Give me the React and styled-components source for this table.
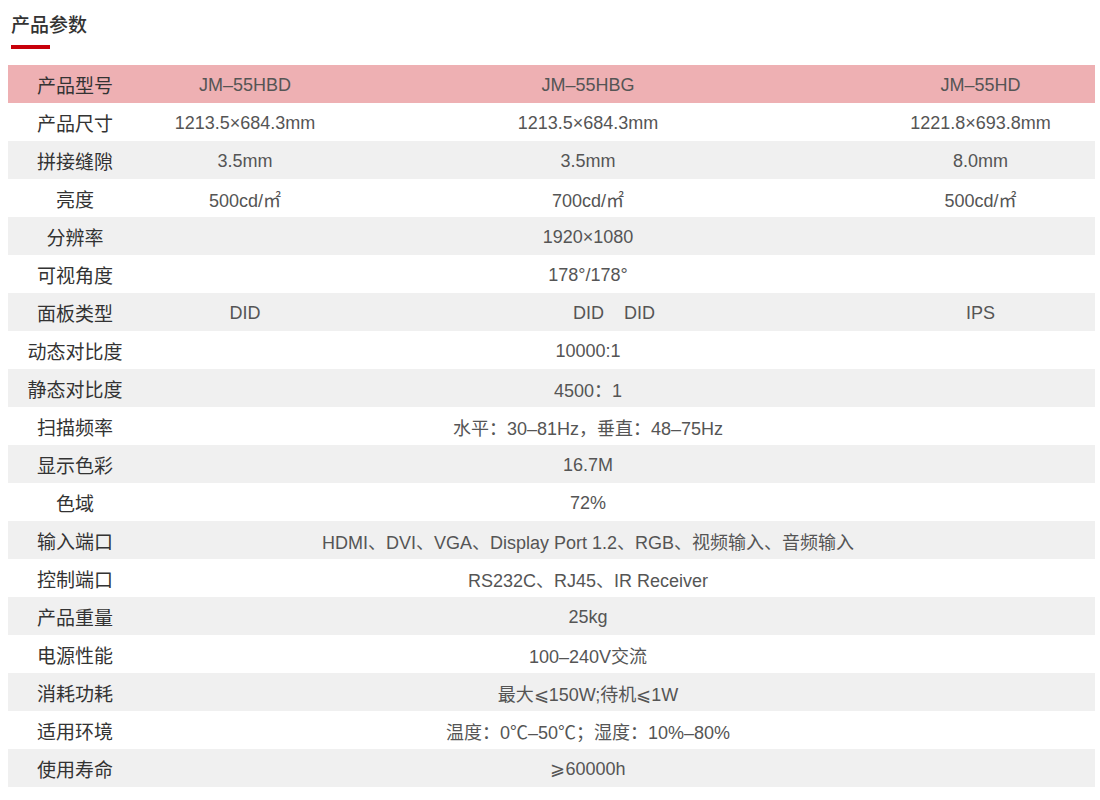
import React from 'react';
import styled, { createGlobalStyle } from 'styled-components';

const Global = createGlobalStyle`
  html, body {
    margin: 0;
    padding: 0;
    background: #fff;
    font-family: "Liberation Sans", "Noto Sans CJK SC", sans-serif;
  }
`;

const Page = styled.div`
  width: 1100px;
  padding: 10px 5px 0 8px;
  box-sizing: border-box;
`;

const Title = styled.h2`
  margin: 0 0 0 3px;
  font-size: 19px;
  line-height: 28px;
  font-weight: 500;
  color: #333;
  font-family: "Noto Sans CJK SC", sans-serif;
`;

const Underline = styled.div`
  margin: 7px 0 0 3px;
  width: 39px;
  height: 4px;
  background: #c8000a;
`;

const Table = styled.div`
  margin-top: 16px;
  width: 1087px;
`;

const Row = styled.div`
  display: grid;
  grid-template-columns: 134px 206px 480px 267px;
  height: 38px;
  align-items: center;
  background: ${p => (p.head ? '#eeb0b3' : p.odd ? '#f0f0f0' : '#fff')};
`;

const Label = styled.div`
  text-align: center;
  font-family: "Noto Sans CJK SC", sans-serif;
  font-size: 19px;
  color: #333;
`;

const Cell = styled.div`
  text-align: center;
  font-size: 18px;
  color: #555;
  white-space: nowrap;
  padding-top: 2px;
  padding-left: ${p => p.shiftLeft || 0}px;
  grid-column: ${p => (p.span ? '2 / 5' : 'auto')};
  padding-right: ${p => (p.span ? 61 : 0)}px;
`;

const rows = [
  { label: '产品尺寸', cells: ['1213.5×684.3mm', '1213.5×684.3mm', '1221.8×693.8mm'] },
  { label: '拼接缝隙', cells: ['3.5mm', '3.5mm', '8.0mm'] },
  { label: '亮度', cells: ['500cd/㎡', '700cd/㎡', '500cd/㎡'] },
  { label: '分辨率', span: '1920×1080' },
  { label: '可视角度', span: '178°/178°' },
  { label: '面板类型', cells: ['DID', 'DID\u00a0\u00a0\u00a0\u00a0DID', 'IPS'], shift: 52 },
  { label: '动态对比度', span: '10000:1' },
  { label: '静态对比度', span: '4500：1' },
  { label: '扫描频率', span: '水平：30–81Hz，垂直：48–75Hz' },
  { label: '显示色彩', span: '16.7M' },
  { label: '色域', span: '72%' },
  { label: '输入端口', span: 'HDMI、DVI、VGA、Display Port 1.2、RGB、视频输入、音频输入' },
  { label: '控制端口', span: 'RS232C、RJ45、IR Receiver' },
  { label: '产品重量', span: '25kg' },
  { label: '电源性能', span: '100–240V交流' },
  { label: '消耗功耗', span: '最大⩽150W;待机⩽1W' },
  { label: '适用环境', span: '温度：0℃–50℃；湿度：10%–80%' },
  { label: '使用寿命', span: '⩾60000h' },
];

const ParamTable = () => (
  <Table>
    <Row head>
      <Label>产品型号</Label>
      <Cell>JM–55HBD</Cell>
      <Cell>JM–55HBG</Cell>
      <Cell shiftLeft={38}>JM–55HD</Cell>
    </Row>
    {rows.map((r, i) => (
      <Row key={r.label} odd={i % 2 === 1}>
        <Label>{r.label}</Label>
        {r.span ? (
          <Cell span>{r.span}</Cell>
        ) : (
          <>
            <Cell>{r.cells[0]}</Cell>
            <Cell shiftLeft={r.shift}>{r.cells[1]}</Cell>
            <Cell shiftLeft={38}>{r.cells[2]}</Cell>
          </>
        )}
      </Row>
    ))}
  </Table>
);

const App = () => (
  <>
    <Global />
    <Page>
      <Title>产品参数</Title>
      <Underline />
      <ParamTable />
    </Page>
  </>
);

export default App;
